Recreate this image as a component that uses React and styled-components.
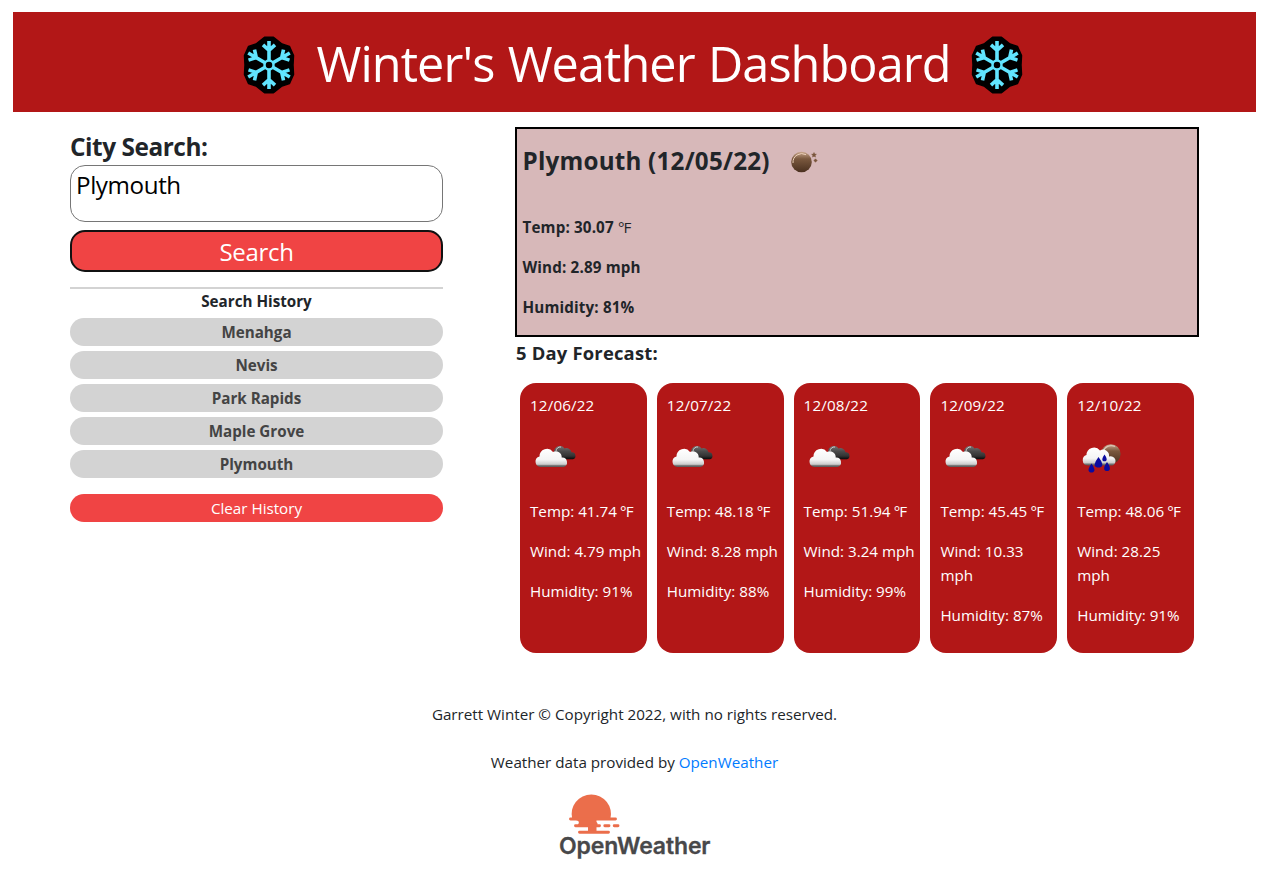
import React from "react";
import styled, { createGlobalStyle } from "styled-components";

const Global = createGlobalStyle`
  *, *::before, *::after { box-sizing: border-box; }
  body { margin: 0; background: #fff; color: #212529; font: 15.2px/24px "Open Sans", "Noto Sans", sans-serif; }
  h1, h2, h3, h4, p { margin: 0; }
`;
const Page = styled.div`padding: 12px 14px 0 13px;`;
const Header = styled.header`
  height: 100px; background: #b21717; color: #fff;
  display: flex; justify-content: center; align-items: center; gap: 20px;
  padding: 5px 3px 0 0;
`;
const Title = styled.h1`
  font-weight: 400; font-size: 48.6px; line-height: 60px; white-space: nowrap;
  letter-spacing: -0.92px; word-spacing: 1.6px; margin-left: 1px; padding-bottom: 3px;
`;
const Unit = styled.span`
  letter-spacing: -0.8px;
  font-weight: 400;
`;
const Main = styled.main`display: flex; gap: 72px; padding: 15px 57px 0;`;
const Side = styled.aside`width: 373px; padding-top: 3px; display: flex; flex-direction: column;`;
const Label = styled.label`
  font-size: 24.4px; font-weight: 700; line-height: 34px; letter-spacing: -0.46px; margin-bottom: 1px;
`;
const Input = styled.input`
  height: 57px; border: 1px solid #767676; border-radius: 15px; padding: 0 6px 18px 5px;
  font: 24.2px "Open Sans", sans-serif; color: #000; outline: 0; letter-spacing: -0.4px;
`;
const SearchButton = styled.button`
  margin-top: 8px; height: 42px; border: 2px solid #111; border-radius: 15px; background: #f04444; color: #fff;
  font: 24px/38px "Open Sans", sans-serif; padding: 1px 0 0; letter-spacing: -0.3px;
`;
const History = styled.section`
  margin-top: 15px; border-top: 2px solid lightgray; display: flex; flex-direction: column; gap: 5px; text-align: center;
`;
const HistoryTitle = styled.h4`font-size: 15.2px; line-height: 24px;`;
const Pill = styled.button`
  height: 28px; border: 0; border-radius: 14px; padding: 0;
  font: ${p => (p.$clear ? 400 : 700)} 15.2px/28px "Open Sans", sans-serif;
  background: ${p => (p.$clear ? "#f04444" : "lightgray")};
  color: ${p => (p.$clear ? "#fff" : "#444")};
  margin-top: ${p => (p.$clear ? 11 : 0)}px;
`;
const Content = styled.section`width: 684px;`;
const Current = styled.section`
  height: 210px; border: 2px solid #000; background: #d7b8b9; padding: 7px 6px 7px 5.500px; font-weight: 700;
  display: flex; flex-direction: column; letter-spacing: 0.15px;
`;
const CityRow = styled.div`display: flex; align-items: center; gap: 9px; height: 50px; margin-bottom: 29px;`;
const City = styled.h2`font-size: 24.2px; line-height: 36px; letter-spacing: 0.22px;`;
const Metric = styled.p`margin-bottom: 16px;`;
const ForecastTitle = styled.h3`
  font-size: 18.4px; line-height: 30px; letter-spacing: 0.2px; padding: 1px 0 0 1px; margin-bottom: 15px;
`;
const Cards = styled.div`display: grid; grid-template-columns: repeat(5, 1fr); gap: 10px; padding: 0 5px;`;
const Card = styled.article`
  height: 270px; border-radius: 16px; background: #b21717; color: #fff; padding: 10px 0 0 10px;
  svg { display: block; margin: 14px 0 18px; }
`;
const Day = styled.p`letter-spacing: 0.15px;`;
const Footer = styled.footer`
  padding-top: 49px; text-align: center;
  p { margin-bottom: 24px; }
  a { color: #007bff; text-decoration: none; }
  svg { display: block; margin: -5px auto 0; }
`;

const Snowflake = () => (
  <svg width="54" height="60" viewBox="-27 -30 54 60">
    <path d="M-4.500-27.700H4.500L13-21L20.500-18.500L24.500-9.500L24 0L24.500 9.500L20.500 18.500L13 21L4.500 27.700H-4.500L-13 21L-20.500 18.500L-24.500 9.500L-24 0L-24.500-9.500L-20.500-18.500L-13-21Z" fill="#000" stroke="#000" strokeWidth="1.500" strokeLinejoin="round" />
    <g fill="none" stroke="#61e5ff" strokeWidth="3.6">
      <circle r="4.500" strokeWidth="2.500" />
      {[0, 60, 120, 180, 240, 300].map(a => (
        <path key={a} transform={`rotate(${a})`} d="M0-5V-24M-6-20.200L0-14.700L6-20.200" />
      ))}
    </g>
  </svg>
);

const Defs = () => (
  <defs>
    <linearGradient id="cl" x1="0" y1="0" x2="0" y2="1"><stop offset="0" stopColor="#fff" /><stop offset=".6" stopColor="#f4f4f4" /><stop offset=".85" stopColor="#ccc" /><stop offset=".92" stopColor="#777" /><stop offset="1" stopColor="#555" /></linearGradient>
    <linearGradient id="dk" x1="0" y1="0" x2="0" y2="1"><stop offset="0" stopColor="#777" /><stop offset=".4" stopColor="#4a4a4a" /><stop offset=".75" stopColor="#333" /><stop offset="1" stopColor="#080808" /></linearGradient>
    <linearGradient id="mn" x1="0" y1="0" x2="0" y2="1"><stop offset="0" stopColor="#c9a68c" /><stop offset=".35" stopColor="#7a583e" /><stop offset="1" stopColor="#4a301f" /></linearGradient>
  </defs>
);
const Moon = () => (
  <svg width="50" height="50"><Defs />
    <circle cx="22.500" cy="26" r="10.300" fill="url(#mn)" />
    <path d="M14 27A8.800 8.800 0 0 1 27 18.700" fill="none" stroke="#ecd0ba" strokeWidth="1" />
    <path d="M35 16.500l.7 1.600 1.700.2-1.300 1.100.4 1.700-1.500-.9-1.500.9.4-1.700-1.300-1.100 1.700-.2zM36.500 22.800l1.700 1.700-1.700 1.700-1.700-1.700z" fill="#7a563c" stroke="#7a563c" strokeWidth=".5" />
  </svg>
);
const Clouds = ({ rain }) => (
  <svg width="50" height="50"><Defs />
    {rain ? (
      <>
        <circle cx="33.800" cy="23" r="9.800" fill="url(#mn)" />
        <path d="M26 21A8.500 8.500 0 0 1 38 15.500" fill="none" stroke="#dcc5b5" strokeWidth="1.200" />
      </>
    ) : (
      <>
        <path d="M25 24A5 5 0 0 1 34.500 17.500A5.200 5.200 0 0 1 41.500 21.300A3.600 3.600 0 0 1 43 28.300H30Z" fill="url(#dk)" />
        <path d="M26 20A4.400 4.400 0 0 1 31 16" fill="none" stroke="#ccc" strokeWidth="1" />
      </>
    )}
    {rain ? (
      <>
        <path d="M10.500 34.500A5.400 5.400 0 0 1 9.500 24A7.500 7.500 0 0 1 23 19.500A6 6 0 0 1 32 25.600A4.600 4.600 0 0 1 35.500 34.500Z" fill="url(#cl)" />
        <path d="M21.500 26Q15.500 34 19 36Q21.500 37.200 24 36Q27.500 34 21.500 26ZM14.500 32.500Q9.800 39 12.500 41Q14.500 42 16.500 41Q19.200 39 14.500 32.500ZM30 31Q25.300 37.500 28 39.500Q30 40.500 32 39.500Q34.700 37.500 30 31ZM27.500 23.500Q24 28.500 26 30Q27.500 30.700 29 30Q31 28.500 27.500 23.500Z" fill="#0a0aa0" />
      </>
    ) : (
      <path d="M10.500 36A5.400 5.400 0 0 1 9.500 25.400A7.500 7.500 0 0 1 23 20.900A6 6 0 0 1 31.700 26.600A4.800 4.800 0 0 1 33.500 36Z" fill="url(#cl)" />
    )}
  </svg>
);
const Logo = () => (
  <svg width="154" height="68" viewBox="0 0 154 68">
    <path d="M14.200 26A19.700 19.700 0 1 1 52.400 26Z" fill="#eb6e4b" />
    <path d="M20 25H40Q37 28 39.500 30.200V32.500H38.500V39H30V33H20V31.500Q22.500 28 18 27Z" fill="#eb6e4b" />
    <path d="M12.500 26H57.500M17.500 32.800H41.500M46.800 32.800H51M56.200 32.800H60M21.500 39.200H50.500" stroke="#eb6e4b" strokeWidth="2.900" strokeLinecap="round" />
    <text x="1" y="61" fontFamily="Inter, sans-serif" fontWeight="600" fontSize="23" textLength="151.500" fill="#48484a" stroke="#48484a" strokeWidth=".3">OpenWeather</text>
  </svg>
);

const days = [
  ["12/06/22", "41.74", "4.79", "91"],
  ["12/07/22", "48.18", "8.28", "88"],
  ["12/08/22", "51.94", "3.24", "99"],
  ["12/09/22", "45.45", "10.33", "87"],
  ["12/10/22", "48.06", "28.25", "91"],
];

export default function App() {
  return (
    <Page>
      <Global />
      <Header><Snowflake /><Title>Winter's Weather Dashboard</Title><Snowflake /></Header>
      <Main>
        <Side>
          <Label htmlFor="city">City Search:</Label>
          <Input id="city" defaultValue="Plymouth" />
          <SearchButton>Search</SearchButton>
          <History>
            <HistoryTitle>Search History</HistoryTitle>
            {["Menahga", "Nevis", "Park Rapids", "Maple Grove", "Plymouth"].map(c => <Pill key={c}>{c}</Pill>)}
            <Pill $clear>Clear History</Pill>
          </History>
        </Side>
        <Content>
          <Current>
            <CityRow><City>Plymouth (12/05/22)</City><Moon /></CityRow>
            <Metric>Temp: 30.07 <Unit>°F</Unit></Metric>
            <Metric>Wind: 2.89 mph</Metric>
            <Metric>Humidity: 81%</Metric>
          </Current>
          <ForecastTitle>5 Day Forecast:</ForecastTitle>
          <Cards>
            {days.map(([date, t, w, h], i) => (
              <Card key={date}>
                <Day>{date}</Day>
                <Clouds rain={i === 4} />
                <Metric>Temp: {t}<Unit> °F</Unit></Metric>
                <Metric>Wind: {w} mph</Metric>
                <Metric>Humidity: {h}%</Metric>
              </Card>
            ))}
          </Cards>
        </Content>
      </Main>
      <Footer>
        <p>Garrett Winter © Copyright 2022, with no rights reserved.</p>
        <p>Weather data provided by <a href="#">OpenWeather</a></p>
        <Logo />
      </Footer>
    </Page>
  );
}
